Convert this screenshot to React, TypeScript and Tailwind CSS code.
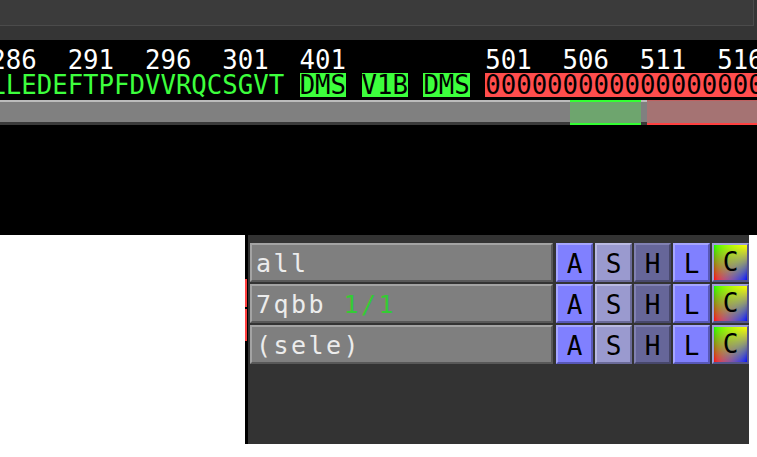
import React from "react";

const mono = "font-['DejaVu_Sans_Mono',monospace]";

const BTN: Record<string, string> = {
  A: "bg-[#8080ff] border-t-[#a6a6ff] border-l-[#a6a6ff] border-b-[#5858b8] border-r-[#5858b8]",
  S: "bg-[#9a9acf] border-t-[#babae2] border-l-[#babae2] border-b-[#6b6b99] border-r-[#6b6b99]",
  H: "bg-[#666699] border-t-[#8181b2] border-l-[#8181b2] border-b-[#48486c] border-r-[#48486c]",
  L: "bg-[#8080ff] border-t-[#a6a6ff] border-l-[#a6a6ff] border-b-[#5858b8] border-r-[#5858b8]",
};

function Row({ children }: { children: React.ReactNode }) {
  return (
    <div className="flex h-[39px] gap-[2px]">
      <div
        className={`w-[303px] mr-[1px] h-[39px] border-2 bg-[#7f7f7f] border-t-[#a3a3a3] border-l-[#a3a3a3] border-b-[#585858] border-r-[#585858] pl-[4px] pt-[3px] leading-[32px] text-[25px] tracking-[2.45px] text-[#ececec] whitespace-pre ${mono}`}
      >
        {children}
      </div>
      {(["A", "S", "H", "L"] as const).map((k) => (
        <div
          key={k}
          className={`w-[37px] h-[39px] border-2 ${BTN[k]} flex justify-center pt-[3px] leading-[32px] text-[26px] text-black ${mono}`}
        >
          {k}
        </div>
      ))}
      <div className="relative w-[37px] h-[39px] border-2 border-t-[#a0a0d8] border-l-[#a0a0d8] border-b-[#55558a] border-r-[#55558a] overflow-hidden">
        <div className="absolute inset-0 bg-linear-to-r from-[#ff0000] to-[#0000ff]" />
        <div className="absolute inset-0 bg-linear-to-r from-[#00ff00] to-[#ffff00] [mask-image:linear-gradient(to_bottom,black,transparent)]" />
        <div
          className={`relative flex justify-center pt-[1px] leading-[32px] text-[26px] text-black ${mono}`}
        >
          C
        </div>
      </div>
    </div>
  );
}

export default function App() {
  const zeros = "0".repeat(24);
  return (
    <div className="w-[757px] h-[457px] overflow-hidden bg-white flex flex-col">
      {/* top chrome */}
      <div className="h-[40px] shrink-0 bg-[#353535]">
        <div className="h-[26px] w-[754px] bg-[#3b3b3b] border-b border-r border-[#4b4b4b]" />
      </div>

      {/* sequence viewer */}
      <div className={`h-[195px] shrink-0 bg-black overflow-hidden pt-[8px] ${mono}`}>
        <div className="ml-[-9.7px] h-[24px] whitespace-pre text-[25.7px] leading-[24px] text-white">
          {"286  291  296  301  401         501  506  511  516"}
        </div>
        <div className="ml-[-9.7px] mt-[1px] h-[24px] whitespace-pre text-[25.7px] leading-[24px] text-[#3dff3d]">
          {"LLEDEFTPFDVVRQCSGVT "}
          <span className="inline-block bg-[#3dff3d] text-black">DMS</span>
          {" "}
          <span className="inline-block bg-[#3dff3d] text-black">V1B</span>
          {" "}
          <span className="inline-block bg-[#3dff3d] text-black">DMS</span>
          {" "}
          <span className="inline-block bg-[#ff4d4d] text-black">{zeros}</span>
        </div>
        <div className="relative mt-[3px] h-[25px] border-t-2 border-b-[3px] border-t-[#bcbcbc] border-b-[#3a3a3a] bg-[#808080]">
          <div className="absolute left-[570px] w-[71px] top-[-2px] bottom-[-3px] bg-[#6ea56e] border-t-2 border-b-2 border-[#33ff33]" />
          <div className="absolute left-[647px] w-[120px] top-[-2px] bottom-[-3px] bg-[#a57373] border-t border-t-[#c06060] border-b-2 border-b-[#ff4040]" />
        </div>
      </div>

      {/* lower area */}
      <div className="flex flex-1">
        <div className="w-[245px] bg-white" />
        <div className="relative w-[504px] h-[209px] bg-[#333333] border-l-[3px] border-black pt-[8px] pl-[2px] flex flex-col gap-[2px]">
          <div className="absolute left-[-3px] top-[44px] w-[2px] h-[28px] bg-[#ff4040]" />
          <div className="absolute left-[-3px] top-[74px] w-[2px] h-[32px] bg-[#ff4040]" />
          <Row>all</Row>
          <Row>
            {"7qbb "}
            <span className="text-[#33cc33]">1/1</span>
          </Row>
          <Row>(sele)</Row>
        </div>
        <div className="flex-1 bg-white" />
      </div>
    </div>
  );
}
